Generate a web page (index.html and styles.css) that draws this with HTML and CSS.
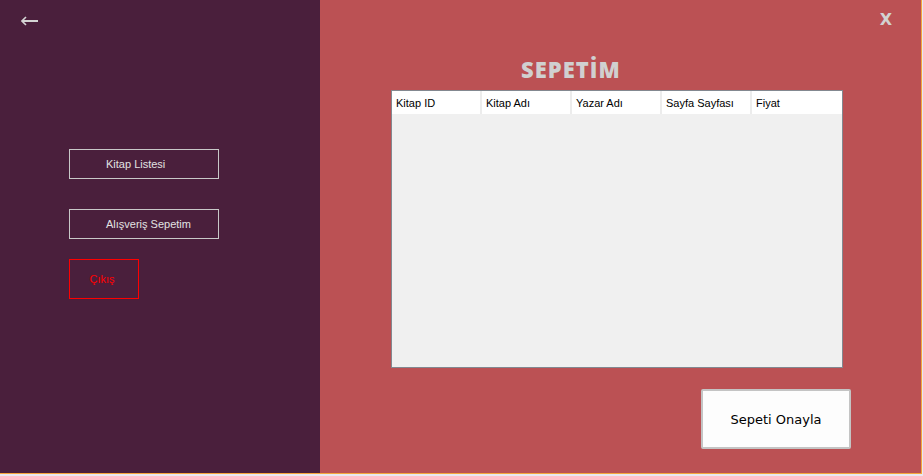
FILE: index.html
```html
<!DOCTYPE html>
<html>
<head>
<meta charset="utf-8">
<link rel="stylesheet" href="styles.css">
</head>
<body>
<div class="window">
  <div class="side">
    <div class="back">
      <svg width="18" height="10" viewBox="0 0 18 10"><path d="M1 5H17" stroke="#d4d4d4" stroke-width="2"/><path d="M5 1L1 5L5 9" stroke="#d4d4d4" stroke-width="1.6" fill="none"/></svg>
    </div>
    <div class="menu">
      <div class="mbtn">Kitap Listesi</div>
      <div class="mbtn">Alışveriş Sepetim</div>
      <div class="mbtn exit">Çıkış</div>
    </div>
  </div>
  <div class="main">
    <div class="topbar"><span class="close">X</span></div>
    <div class="title">SEPETİM</div>
    <div class="grid">
      <div class="ghead">
        <div class="gcol">Kitap ID</div>
        <div class="gcol">Kitap Adı</div>
        <div class="gcol">Yazar Adı</div>
        <div class="gcol">Sayfa Sayfası</div>
        <div class="gcol">Fiyat</div>
      </div>
    </div>
    <div class="confirm">Sepeti Onayla</div>
  </div>
</div>
</body>
</html>
```
FILE: styles.css
```css
html, body { margin: 0; padding: 0; }
body {
  background: #e8e8f0;
  width: 923px;
  height: 476px;
  overflow: hidden;
  font-family: "Liberation Sans", Arial, sans-serif;
}
.window {
  display: flex;
  width: 921px;
  height: 473px;
  border-right: 1px solid #f5a53c;
  border-bottom: 1px solid #f5a53c;
}
.side {
  width: 320px;
  background: #4a1f3c;
  display: flex;
  flex-direction: column;
}
.back {
  padding: 16px 0 0 21px;
  height: 10px;
}
.back svg { display: block; }
.menu {
  margin-top: 123px;
  margin-left: 69px;
  display: flex;
  flex-direction: column;
  align-items: flex-start;
}
.mbtn {
  box-sizing: border-box;
  width: 150px;
  height: 30px;
  border: 1px solid #c8c8c8;
  color: #e2e2e2;
  font-size: 11px;
  display: flex;
  align-items: center;
  padding-left: 36px;
  margin-bottom: 30px;
}
.mbtn.exit {
  width: 70px;
  height: 40px;
  border-color: #ff0000;
  color: #ff0000;
  margin-top: -10px;
  padding-left: 0;
  padding-right: 4px;
  justify-content: center;
}
.main {
  flex: 1;
  background: #bb5154;
  display: flex;
  flex-direction: column;
  align-items: flex-start;
}
.topbar {
  align-self: stretch;
  display: flex;
  justify-content: flex-end;
  padding: 10px 29px 0 0;
  height: 20px;
}
.close {
  color: #d2d2d2;
  font-family: "DejaVu Sans", sans-serif;
  font-weight: bold;
  font-size: 16px;
  line-height: 20px;
}
.title {
  margin: 28px 0 0 201px;
  color: #d0d0d0;
  font-family: "Open Sans", sans-serif;
  font-weight: 800;
  font-size: 22px;
  line-height: 22px;
  letter-spacing: 1px;
}
.grid {
  margin: 10px 0 0 71px;
  box-sizing: border-box;
  width: 452px;
  height: 278px;
  background: #f0f0f0;
  border: 1px solid #838890;
}
.ghead {
  display: flex;
  height: 23px;
  background: #ffffff;
}
.gcol {
  box-sizing: border-box;
  width: 90px;
  border-right: 2px solid #ececec;
  font-size: 11px;
  color: #000;
  padding: 6px 0 0 4px;
}
.gcol:last-child { border-right: none; }
.confirm {
  margin: 21px 0 0 381px;
  box-sizing: border-box;
  width: 150px;
  height: 60px;
  background: #fdfdfd;
  border: 2px solid #c4c4c4;
  border-radius: 2px;
  display: flex;
  align-items: center;
  justify-content: center;
  font-family: "DejaVu Sans", sans-serif;
  font-size: 13px;
  color: #000;
}
```
